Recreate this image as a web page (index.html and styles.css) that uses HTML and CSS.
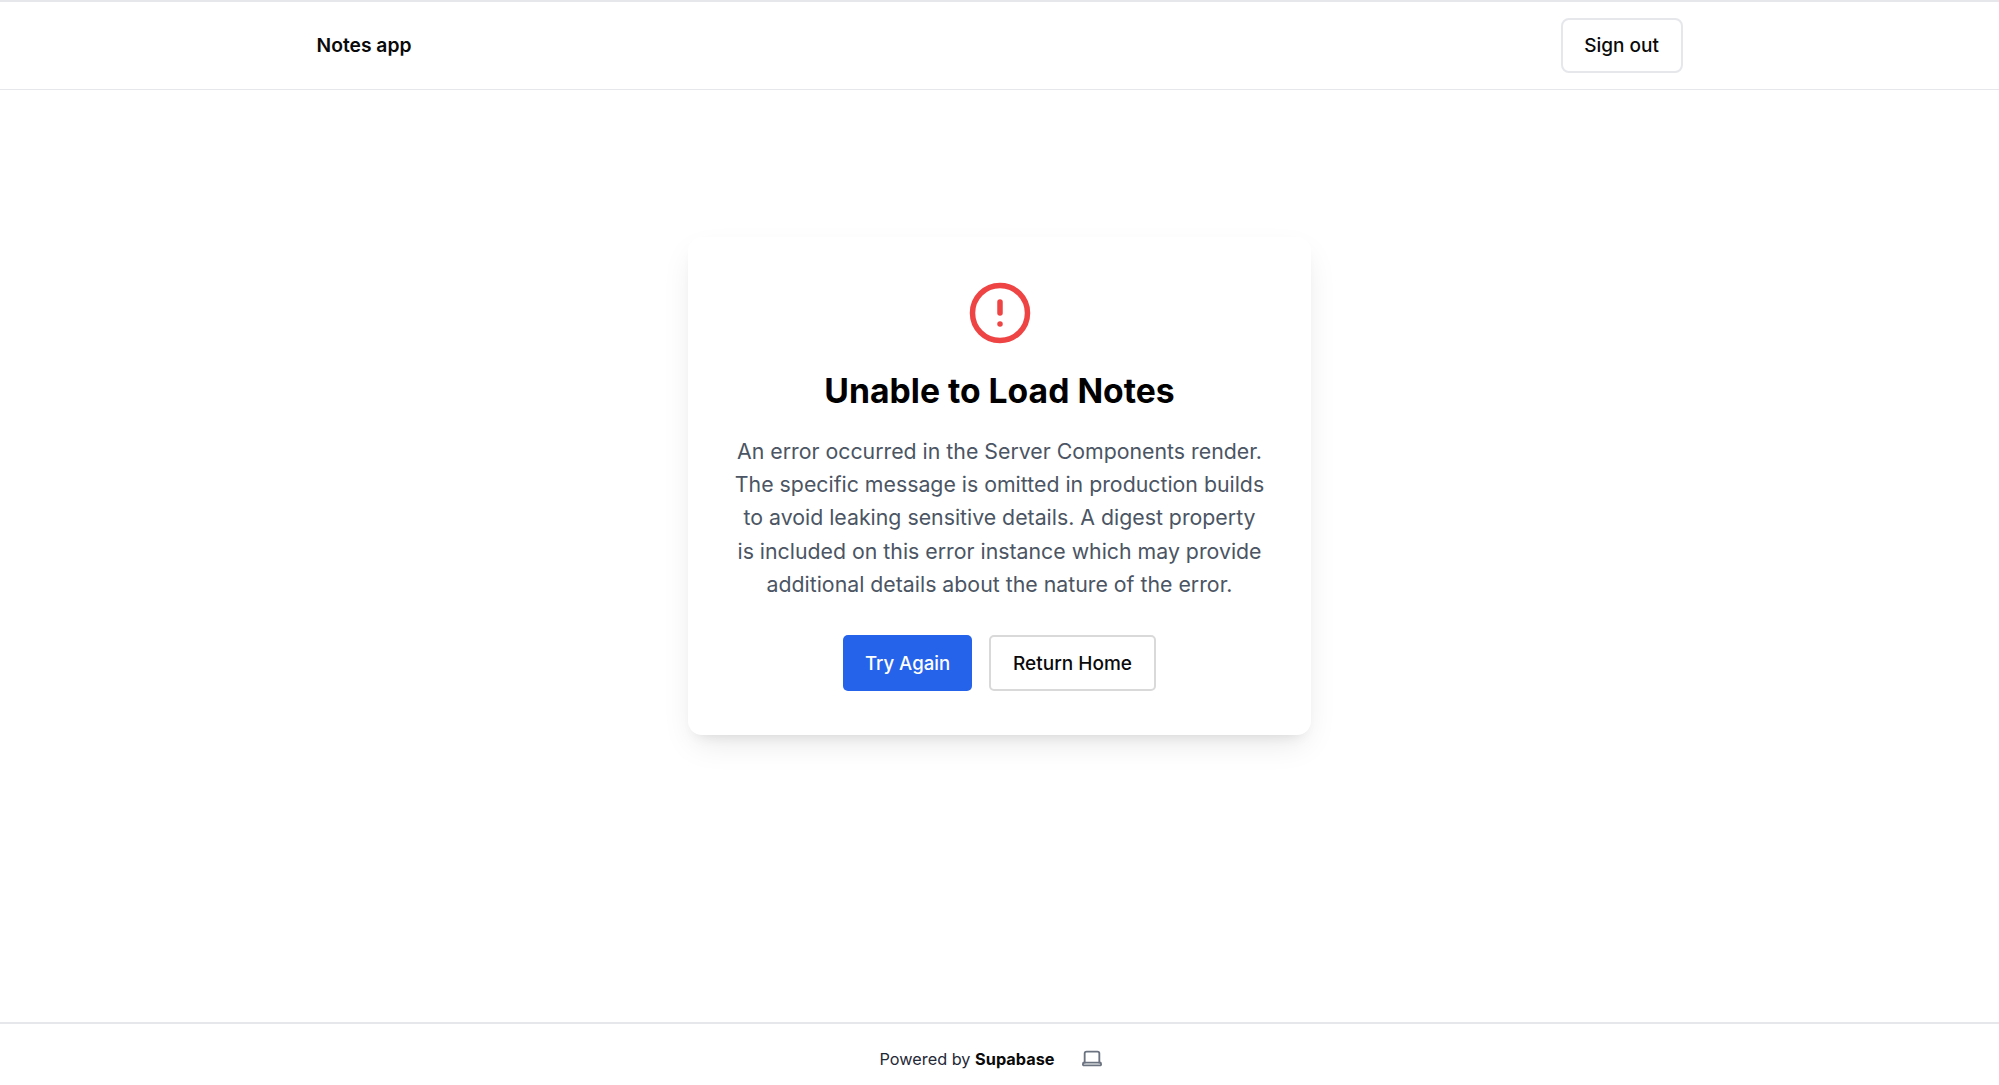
FILE: index.html
```html
<!DOCTYPE html>
<html lang="en">
<head>
  <meta charset="UTF-8" />
  <title>Notes app</title>
  <link rel="stylesheet" href="styles.css">
</head>
<body>
  <header class="topbar">
    <div class="topbar-inner">
      <span class="brand">Notes app</span>
      <button class="btn btn-signout" type="button">Sign out</button>
    </div>
  </header>

  <main class="content">
    <section class="card">
      <svg class="alert-icon" viewBox="0 0 24 24" fill="none" stroke="currentColor" stroke-width="2" stroke-linecap="round" stroke-linejoin="round">
        <circle cx="12" cy="12" r="10"></circle>
        <line x1="12" y1="8" x2="12" y2="12"></line>
        <line x1="12" y1="16" x2="12.01" y2="16"></line>
      </svg>
      <h1 class="card-title">Unable to Load Notes</h1>
      <p class="card-text">An error occurred in the Server Components render. The specific message is omitted in production builds to avoid leaking sensitive details. A digest property is included on this error instance which may provide additional details about the nature of the error.</p>
      <div class="card-actions">
        <button class="btn btn-primary" type="button">Try Again</button>
        <a class="btn btn-outline" href="#">Return Home</a>
      </div>
    </section>
  </main>

  <footer class="footer">
    <span>Powered by <b>Supabase</b></span>
    <!-- theme switcher -->
    <svg class="laptop-icon" viewBox="0 0 24 24" fill="none" stroke="currentColor" stroke-width="2" stroke-linecap="round" stroke-linejoin="round">
      <path d="M4 16V6a2 2 0 0 1 2-2h12a2 2 0 0 1 2 2v10"></path>
      <path d="M2.5 16h19l.4 1.6a1.2 1.2 0 0 1-1.2 1.4H3.3a1.2 1.2 0 0 1-1.2-1.4z"></path>
    </svg>
  </footer>
</body>
</html>
```

FILE: styles.css
```css
* {
  box-sizing: border-box;
}

html,
body {
  height: 100%;
}

body {
  margin: 0;
  min-height: 1085px;
  display: flex;
  flex-direction: column;
  font-family: Inter, "Liberation Sans", sans-serif;
  color: #0a0a0a;
  background: #fff;
}

.topbar {
  height: 90px;
  border-top: 2px solid #e5e7eb;
  border-bottom: 1px solid #e5e7eb;
}

.topbar-inner {
  width: 1366px;
  height: 100%;
  margin: 0 auto;
  display: flex;
  align-items: center;
  justify-content: space-between;
}

.brand {
  padding-bottom: 2px;
  font-size: 19.3px;
  font-weight: 600;
}

.btn {
  display: inline-flex;
  align-items: center;
  justify-content: center;
  height: 56px;
  font-family: inherit;
  font-size: 19px;
  font-weight: 500;
  color: #0a0a0a;
  text-decoration: none;
  background: #fff;
  border: 2px solid #e5e7eb;
  border-radius: 8px;
}

.btn-signout {
  width: 122px;
  height: 55px;
}

.content {
  flex: 1;
  display: flex;
  justify-content: center;
  padding-top: 147px;
}

.card {
  width: 623px;
  height: 498px;
  padding: 43px 45px 0;
  display: flex;
  flex-direction: column;
  align-items: center;
  text-align: center;
  background: #fff;
  border-radius: 14px;
  box-shadow: 0 13px 32px -6px rgba(0, 0, 0, 0.1), 0 8px 13px -8px rgba(0, 0, 0, 0.1);
}

.alert-icon {
  width: 66px;
  height: 66px;
  color: #ef4444;
  flex-shrink: 0;
}

.card-title {
  margin: 23px 0 0;
  font-size: 33.7px;
  line-height: 44px;
  font-weight: 700;
  color: #000;
}

.card-text {
  margin: 22px 0 0;
  font-size: 21.3px;
  line-height: 33.2px;
  color: #4b5563;
}

.card-actions {
  margin-top: 34px;
  display: flex;
  gap: 17px;
}

.btn-primary {
  width: 129px;
  font-size: 18.6px;
  color: #fff;
  background: #2563eb;
  border: none;
  border-radius: 5px;
}

.btn-outline {
  width: 167px;
  border-color: #d9d9d9;
  border-radius: 5px;
}

.footer {
  height: 63px;
  padding: 8px 16px 0 0;
  display: flex;
  align-items: center;
  justify-content: center;
  gap: 27px;
  font-size: 16.3px;
  color: #1f2937;
  border-top: 2px solid #e5e7eb;
}

.footer b {
  color: #0a0a0a;
}

.laptop-icon {
  width: 22px;
  height: 22px;
  color: #6b7280;
}
```
